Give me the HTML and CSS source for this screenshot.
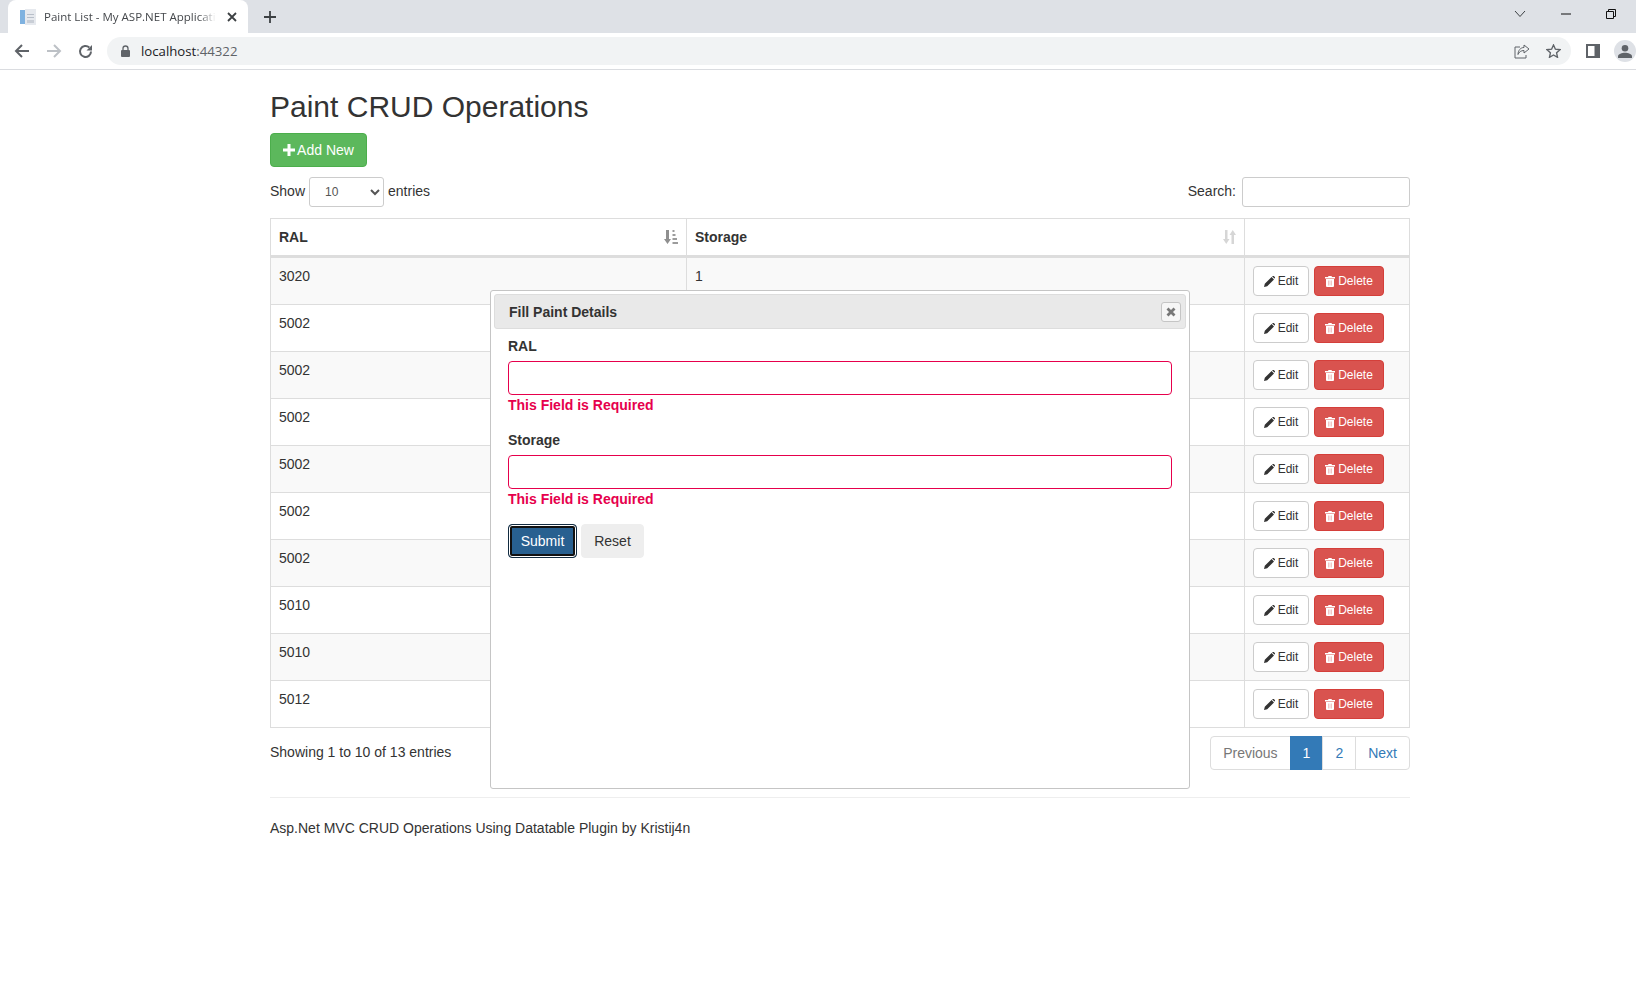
FILE: index.html
```html
<!DOCTYPE html>
<html>
    <head>
        <meta charset="utf-8">
        <title>Paint List - My ASP.NET Application</title>
        <link rel="stylesheet" href="styles.css">
    </head>
    <body>
      <div class="tabstrip">
        <div class="tab">
          <svg class="favicon" width="16" height="16" viewBox="0 0 16 16"><rect x="0" y="1" width="5" height="14" fill="#7fb2e0"/><rect x="5" y="0" width="11" height="16" fill="#e6e9ee"/><rect x="7" y="5" width="7" height="1" fill="#b8bfc9"/><rect x="7" y="8" width="7" height="1" fill="#b8bfc9"/><rect x="7" y="11" width="7" height="3" fill="#c9ced6"/></svg>
          <span class="tabTitle">Paint List - My ASP.NET Applicati</span>
          <svg class="tabClose" width="10" height="10" viewBox="0 0 10 10"><path d="M1 1l8 8M9 1l-8 8" stroke="#3c4043" stroke-width="1.8"/></svg>
        </div>
        <svg class="newTab" width="14" height="14" viewBox="0 0 14 14"><path d="M7 1v12M1 7h12" stroke="#3c4043" stroke-width="1.8"/></svg>
        <div class="winControls">
          <svg width="12" height="8" viewBox="0 0 12 8"><path d="M1 1l5 5.5L11 1" fill="none" stroke="#3c4043" stroke-width="1"/></svg>
          <svg width="10" height="2" viewBox="0 0 10 2"><path d="M0 1h10" stroke="#111" stroke-width="1"/></svg>
          <svg width="10" height="10" viewBox="0 0 10 10"><path d="M.5 2.5h7v7h-7zM2.5 2.5v-2h7v7h-2" fill="none" stroke="#111" stroke-width="1"/></svg>
        </div>
      </div>

      <div class="toolbar">
        <div class="navBtn"><svg width="16" height="14" viewBox="0 0 16 14"><path d="M15 7H2M8 1L2 7l6 6" fill="none" stroke="#5f6368" stroke-width="2"/></svg></div>
        <div class="navBtn"><svg width="16" height="14" viewBox="0 0 16 14"><path d="M1 7h13M8 1l6 6-6 6" fill="none" stroke="#bdc1c6" stroke-width="2"/></svg></div>
        <div class="navBtn"><svg width="15" height="15" viewBox="0 0 15 15"><path d="M13 7.5A5.5 5.5 0 1 1 11.3 3.5" fill="none" stroke="#5f6368" stroke-width="2"/><path d="M14 1v5.5H8.500z" fill="#5f6368"/></svg></div>
        <div class="addressBar">
          <svg width="9" height="12" viewBox="0 0 9 12"><path d="M2 5V3.500a2.500 2.500 0 0 1 5 0V5" fill="none" stroke="#5f6368" stroke-width="1.300"/><rect x="0" y="5" width="9" height="7" rx="1" fill="#5f6368"/></svg>
          <span class="url">localhost<span class="port">:44322</span></span>
          <div class="addressIcons">
            <svg width="16" height="15" viewBox="0 0 16 15"><path d="M6 3H1v11h11v-3" fill="none" stroke="#5f6368" stroke-width="1"/><path d="M10 1l5 4-5 4V6.500C7 6.500 5 8 4 10.500 4 6.500 6.500 3.500 10 3.500z" fill="none" stroke="#5f6368" stroke-width="1"/></svg>
            <svg width="15" height="14" viewBox="0 0 15 14"><path d="M7.500 1l1.900 4.200 4.600.5-3.400 3.100.9 4.500-4-2.300-4 2.300.9-4.500L1 5.700l4.600-.5z" fill="none" stroke="#5f6368" stroke-width="1.400"/></svg>
          </div>
        </div>
        <svg class="sidePanel" width="14" height="14" viewBox="0 0 14 14"><rect width="14" height="14" fill="#5f6368"/><rect x="2" y="2" width="6.500" height="10" fill="#fff"/></svg>
        <div class="avatar"><svg width="14" height="13" viewBox="0 0 14 13"><circle cx="7" cy="3.300" r="3.300" fill="#5f6368"/><path d="M0 13v-1.500C0 9 4 7.800 7 7.800s7 1.200 7 3.700V13z" fill="#5f6368"/></svg></div>
      </div>

      <div class="page">
        <h2>Paint CRUD Operations</h2>
        <a class="btn btnSuccess addNew">
          <svg width="12" height="12" viewBox="0 0 12 12"><path d="M4.500 0h3v4.500H12v3H7.500V12h-3V7.500H0v-3h4.500z" fill="#fff"/></svg>
          Add New
        </a>

        <div class="tableTools">
          <label class="lengthLabel">Show
            <select class="lengthSelect"><option>10</option></select>
            entries</label>
          <label class="searchLabel">Search:
            <input class="searchInput" type="search">
          </label>
        </div>

        <table class="paintTable">
          <thead>
            <tr>
              <th class="colRal">RAL
                <svg class="sortIcon" width="14" height="14" viewBox="0 0 14 14"><path d="M2 0h3v9h2l-3.500 5L0 9h2z" fill="#8f8f8f"/><path d="M8.500 0h2v2h-2zM8.500 4h3v2h-3zM8.500 8h4.500v2H8.500zM8.500 12H14v2H8.500z" fill="#9c9c9c"/></svg>
              </th>
              <th class="colStorage">Storage
                <svg class="sortIcon" width="13" height="14" viewBox="0 0 13 14"><path d="M2 0h2.500v9h2L3.250 14 0 9h2zM8.500 14H11V5h2L9.750 0 6.500 5h2z" fill="#d6d6d6"/></svg>
              </th>
              <th class="colActions"></th>
            </tr>
          </thead>
          <tbody>
            <tr><td>3020</td><td>1</td><td><div class="actions"><a class="btn btnDefault btnSm"><svg class="pencil" width="11" height="11" viewBox="0 0 11 11"><path d="M0 11l.8-3.200L7.600 1l2.400 2.400-6.800 6.800zM8.200.400l.4-.400a1 1 0 0 1 1.200 0l1 1a1 1 0 0 1 0 1.200l-.4.400z" fill="#333"/></svg>Edit</a><a class="btn btnDanger btnSm"><svg class="trash" width="10" height="11" viewBox="0 0 10 11"><path d="M3.500 0h3l.5 1h3v1.500H0V1h3zM1 3h8v7a1 1 0 0 1-1 1H2a1 1 0 0 1-1-1z" fill="#fff"/><path d="M3.500 4.500v5M5 4.500v5M6.500 4.500v5" stroke="#e8a09d" stroke-width=".6"/></svg>Delete</a></div></td></tr>
            <tr><td>5002</td><td></td><td><div class="actions"><a class="btn btnDefault btnSm"><svg class="pencil" width="11" height="11" viewBox="0 0 11 11"><path d="M0 11l.8-3.200L7.600 1l2.400 2.400-6.800 6.800zM8.200.400l.4-.400a1 1 0 0 1 1.200 0l1 1a1 1 0 0 1 0 1.200l-.4.400z" fill="#333"/></svg>Edit</a><a class="btn btnDanger btnSm"><svg class="trash" width="10" height="11" viewBox="0 0 10 11"><path d="M3.500 0h3l.5 1h3v1.500H0V1h3zM1 3h8v7a1 1 0 0 1-1 1H2a1 1 0 0 1-1-1z" fill="#fff"/><path d="M3.500 4.500v5M5 4.500v5M6.500 4.500v5" stroke="#e8a09d" stroke-width=".6"/></svg>Delete</a></div></td></tr>
            <tr><td>5002</td><td></td><td><div class="actions"><a class="btn btnDefault btnSm"><svg class="pencil" width="11" height="11" viewBox="0 0 11 11"><path d="M0 11l.8-3.200L7.600 1l2.400 2.400-6.800 6.800zM8.200.400l.4-.400a1 1 0 0 1 1.200 0l1 1a1 1 0 0 1 0 1.200l-.4.400z" fill="#333"/></svg>Edit</a><a class="btn btnDanger btnSm"><svg class="trash" width="10" height="11" viewBox="0 0 10 11"><path d="M3.500 0h3l.5 1h3v1.500H0V1h3zM1 3h8v7a1 1 0 0 1-1 1H2a1 1 0 0 1-1-1z" fill="#fff"/><path d="M3.500 4.500v5M5 4.500v5M6.500 4.500v5" stroke="#e8a09d" stroke-width=".6"/></svg>Delete</a></div></td></tr>
            <tr><td>5002</td><td></td><td><div class="actions"><a class="btn btnDefault btnSm"><svg class="pencil" width="11" height="11" viewBox="0 0 11 11"><path d="M0 11l.8-3.200L7.600 1l2.400 2.400-6.800 6.800zM8.200.400l.4-.400a1 1 0 0 1 1.200 0l1 1a1 1 0 0 1 0 1.200l-.4.400z" fill="#333"/></svg>Edit</a><a class="btn btnDanger btnSm"><svg class="trash" width="10" height="11" viewBox="0 0 10 11"><path d="M3.500 0h3l.5 1h3v1.500H0V1h3zM1 3h8v7a1 1 0 0 1-1 1H2a1 1 0 0 1-1-1z" fill="#fff"/><path d="M3.500 4.500v5M5 4.500v5M6.500 4.500v5" stroke="#e8a09d" stroke-width=".6"/></svg>Delete</a></div></td></tr>
            <tr><td>5002</td><td></td><td><div class="actions"><a class="btn btnDefault btnSm"><svg class="pencil" width="11" height="11" viewBox="0 0 11 11"><path d="M0 11l.8-3.200L7.600 1l2.400 2.400-6.800 6.800zM8.200.400l.4-.400a1 1 0 0 1 1.200 0l1 1a1 1 0 0 1 0 1.200l-.4.400z" fill="#333"/></svg>Edit</a><a class="btn btnDanger btnSm"><svg class="trash" width="10" height="11" viewBox="0 0 10 11"><path d="M3.500 0h3l.5 1h3v1.500H0V1h3zM1 3h8v7a1 1 0 0 1-1 1H2a1 1 0 0 1-1-1z" fill="#fff"/><path d="M3.500 4.500v5M5 4.500v5M6.500 4.500v5" stroke="#e8a09d" stroke-width=".6"/></svg>Delete</a></div></td></tr>
            <tr><td>5002</td><td></td><td><div class="actions"><a class="btn btnDefault btnSm"><svg class="pencil" width="11" height="11" viewBox="0 0 11 11"><path d="M0 11l.8-3.200L7.600 1l2.400 2.400-6.800 6.800zM8.200.400l.4-.400a1 1 0 0 1 1.200 0l1 1a1 1 0 0 1 0 1.200l-.4.400z" fill="#333"/></svg>Edit</a><a class="btn btnDanger btnSm"><svg class="trash" width="10" height="11" viewBox="0 0 10 11"><path d="M3.500 0h3l.5 1h3v1.500H0V1h3zM1 3h8v7a1 1 0 0 1-1 1H2a1 1 0 0 1-1-1z" fill="#fff"/><path d="M3.500 4.500v5M5 4.500v5M6.500 4.500v5" stroke="#e8a09d" stroke-width=".6"/></svg>Delete</a></div></td></tr>
            <tr><td>5002</td><td></td><td><div class="actions"><a class="btn btnDefault btnSm"><svg class="pencil" width="11" height="11" viewBox="0 0 11 11"><path d="M0 11l.8-3.200L7.600 1l2.400 2.400-6.800 6.800zM8.200.400l.4-.400a1 1 0 0 1 1.200 0l1 1a1 1 0 0 1 0 1.200l-.4.400z" fill="#333"/></svg>Edit</a><a class="btn btnDanger btnSm"><svg class="trash" width="10" height="11" viewBox="0 0 10 11"><path d="M3.500 0h3l.5 1h3v1.500H0V1h3zM1 3h8v7a1 1 0 0 1-1 1H2a1 1 0 0 1-1-1z" fill="#fff"/><path d="M3.500 4.500v5M5 4.500v5M6.500 4.500v5" stroke="#e8a09d" stroke-width=".6"/></svg>Delete</a></div></td></tr>
            <tr><td>5010</td><td></td><td><div class="actions"><a class="btn btnDefault btnSm"><svg class="pencil" width="11" height="11" viewBox="0 0 11 11"><path d="M0 11l.8-3.200L7.600 1l2.400 2.400-6.800 6.800zM8.200.400l.4-.400a1 1 0 0 1 1.200 0l1 1a1 1 0 0 1 0 1.200l-.4.400z" fill="#333"/></svg>Edit</a><a class="btn btnDanger btnSm"><svg class="trash" width="10" height="11" viewBox="0 0 10 11"><path d="M3.500 0h3l.5 1h3v1.500H0V1h3zM1 3h8v7a1 1 0 0 1-1 1H2a1 1 0 0 1-1-1z" fill="#fff"/><path d="M3.500 4.500v5M5 4.500v5M6.500 4.500v5" stroke="#e8a09d" stroke-width=".6"/></svg>Delete</a></div></td></tr>
            <tr><td>5010</td><td></td><td><div class="actions"><a class="btn btnDefault btnSm"><svg class="pencil" width="11" height="11" viewBox="0 0 11 11"><path d="M0 11l.8-3.200L7.600 1l2.400 2.400-6.800 6.800zM8.200.400l.4-.400a1 1 0 0 1 1.200 0l1 1a1 1 0 0 1 0 1.200l-.4.400z" fill="#333"/></svg>Edit</a><a class="btn btnDanger btnSm"><svg class="trash" width="10" height="11" viewBox="0 0 10 11"><path d="M3.500 0h3l.5 1h3v1.500H0V1h3zM1 3h8v7a1 1 0 0 1-1 1H2a1 1 0 0 1-1-1z" fill="#fff"/><path d="M3.500 4.500v5M5 4.500v5M6.500 4.500v5" stroke="#e8a09d" stroke-width=".6"/></svg>Delete</a></div></td></tr>
            <tr><td>5012</td><td></td><td><div class="actions"><a class="btn btnDefault btnSm"><svg class="pencil" width="11" height="11" viewBox="0 0 11 11"><path d="M0 11l.8-3.200L7.600 1l2.400 2.400-6.800 6.800zM8.200.400l.4-.400a1 1 0 0 1 1.200 0l1 1a1 1 0 0 1 0 1.200l-.4.400z" fill="#333"/></svg>Edit</a><a class="btn btnDanger btnSm"><svg class="trash" width="10" height="11" viewBox="0 0 10 11"><path d="M3.500 0h3l.5 1h3v1.500H0V1h3zM1 3h8v7a1 1 0 0 1-1 1H2a1 1 0 0 1-1-1z" fill="#fff"/><path d="M3.500 4.500v5M5 4.500v5M6.500 4.500v5" stroke="#e8a09d" stroke-width=".6"/></svg>Delete</a></div></td></tr>
          </tbody>
        </table>

        <div class="tableFooter">
          <div class="tableInfo">Showing 1 to 10 of 13 entries</div>
          <ul class="pagination">
            <li class="pageDisabled">Previous</li>
            <li class="pageActive">1</li>
            <li>2</li>
            <li>Next</li>
          </ul>
        </div>

        <hr class="footerRule">
        <footer>Asp.Net MVC CRUD Operations Using Datatable Plugin by Kristij4n</footer>
      </div>

      <div class="dialog">
        <div class="dialogTitle">
          <span>Fill Paint Details</span>
          <button class="dialogClose"><svg width="10" height="10" viewBox="0 0 10 10"><path d="M1.500 1.500l7 7M8.500 1.500l-7 7" stroke="#777" stroke-width="2.800"/></svg></button>
        </div>
        <form class="dialogBody">
          <div class="formGroup">
            <label class="formLabel">RAL</label>
            <input class="formInput" type="text">
            <span class="fieldError">This Field is Required</span>
          </div>
          <div class="formGroup">
            <label class="formLabel">Storage</label>
            <input class="formInput" type="text">
            <span class="fieldError">This Field is Required</span>
          </div>
          <div class="formButtons">
            <button class="btn btnSubmit" type="button">Submit</button>
            <button class="btn btnReset" type="button">Reset</button>
          </div>
        </form>
      </div>
    </body>
</html>
```

FILE: styles.css
```css
body {
    margin: 0;
    font-family: "Liberation Sans", Arial, sans-serif;
    font-size: 14px;
    line-height: 20px;
    color: #333;
    background-color: #fff;
    overflow: hidden;
    height: 1004px;
}

/* browser chrome */
.tabstrip {
    height: 33px;
    background-color: #dee1e6;
    display: flex;
    align-items: center;
    padding-left: 8px;
}

.tab {
    width: 240px;
    height: 33px;
    box-sizing: border-box;
    background-color: #fff;
    border-radius: 8px 8px 0 0;
    display: flex;
    align-items: center;
    padding: 0 11px 0 12px;
}

.favicon { flex: none; margin-right: 8px; }

.tabTitle {
    font-family: "Open Sans", sans-serif;
    font-size: 11.500px;
    color: #45484c;
    white-space: nowrap;
    -webkit-mask-image: linear-gradient(to right, #000 90%, transparent);
    mask-image: linear-gradient(to right, #000 90%, transparent);
}

.tabClose { margin-left: auto; }

.newTab { margin-left: 15px; }

.winControls {
    margin-left: auto;
    display: flex;
    align-items: center;
    gap: 35px;
    padding-right: 20px;
    position: relative;
    top: -3px;
}

.toolbar {
    height: 36px;
    border-bottom: 1px solid #dadce0;
    display: flex;
    align-items: center;
    padding-left: 7px;
    overflow: hidden;
}

.navBtn {
    width: 30px;
    height: 28px;
    display: flex;
    align-items: center;
    justify-content: center;
}

.navBtn:first-child { margin-right: 2px; }
.navBtn:nth-child(2) { margin-right: 2px; }

.addressBar {
    width: 1464px;
    height: 28px;
    margin-left: 7px;
    flex: none;
    background-color: #f1f3f4;
    border-radius: 14px;
    display: flex;
    align-items: center;
    padding-left: 14px;
    box-sizing: border-box;
}

.url {
    margin-left: 11px;
    font-family: "Open Sans", sans-serif;
    font-size: 13.200px;
    color: #202124;
}

.port { color: #5f6368; }

.addressIcons {
    margin-left: auto;
    display: flex;
    align-items: center;
    gap: 16px;
    padding-right: 10px;
}

.sidePanel { flex: none; margin-left: 15px; }

.avatar {
    flex: none;
    width: 22px;
    height: 22px;
    margin-left: 14px;
    border-radius: 50%;
    background-color: #dee1e6;
    display: flex;
    align-items: center;
    justify-content: center;
}

/* page */
.page {
    width: 1140px;
    margin-left: 270px;
}

h2 {
    font-size: 30px;
    font-weight: 500;
    line-height: 33px;
    margin: 20px 0 10px;
}

.btn {
    display: inline-flex;
    align-items: center;
    justify-content: center;
    box-sizing: border-box;
    border: 1px solid transparent;
    border-radius: 4px;
    font-family: inherit;
    font-size: 14px;
}

.addNew { width: 97px; height: 34px; gap: 2px; }
.btnSuccess { background-color: #5cb85c; border-color: #4cae4c; color: #fff; }
.btnDefault { background-color: #fff; border-color: #ccc; color: #333; }
.btnDanger { background-color: #d9534f; border-color: #d43f3a; color: #fff; }

.btnSm { height: 30px; font-size: 12px; }
.btnDefault.btnSm { width: 56px; }
.btnDanger.btnSm { width: 70px; }
.pencil, .trash { margin-right: 3px; }

.tableTools {
    display: flex;
    justify-content: space-between;
    margin-top: 10px;
    height: 30px;
}

.lengthLabel, .searchLabel {
    display: flex;
    align-items: flex-start;
    line-height: 28px;
    gap: 4px;
}
.searchLabel { gap: 6px; }

.lengthSelect {
    width: 75px;
    height: 30px;
    padding: 0 0 0 11px;
    font-family: inherit;
    font-size: 12px;
    color: #555;
    background-color: #fff;
    border: 1px solid #ccc;
    border-radius: 3px;
}

.searchInput {
    width: 168px;
    height: 30px;
    box-sizing: border-box;
    border: 1px solid #ccc;
    border-radius: 3px;
}

.paintTable {
    width: 1140px;
    margin-top: 11px;
    border-collapse: collapse;
    table-layout: fixed;
}

.paintTable th, .paintTable td {
    border: 1px solid #ddd;
    padding: 8px;
    text-align: left;
    vertical-align: top;
}

.paintTable th {
    height: 20px;
    border-bottom-width: 3px;
    position: relative;
}

.paintTable tbody tr:nth-child(odd) { background-color: #f9f9f9; }

.colRal { width: 399px; }
.colStorage { width: 541px; }

.sortIcon { position: absolute; right: 8px; top: 11px; }

.actions { display: flex; gap: 5px; }

.tableFooter {
    display: flex;
    justify-content: space-between;
    align-items: flex-start;
}

.tableInfo { padding-top: 14px; }

.pagination {
    list-style: none;
    display: flex;
    margin: 8px 0 0;
    padding: 0;
}

.pagination li {
    height: 34px;
    box-sizing: border-box;
    padding: 6px 12px;
    border: 1px solid #ddd;
    margin-left: -1px;
    color: #337ab7;
    background-color: #fff;
}

.pagination li:first-child { border-radius: 4px 0 0 4px; }
.pagination li:last-child { border-radius: 0 4px 4px 0; }
.pagination .pageDisabled { color: #777; }
.pagination .pageActive { background-color: #337ab7; border-color: #337ab7; color: #fff; }

.footerRule {
    margin: 27px 0 0;
    border: 0;
    border-top: 1px solid #eee;
}

footer { margin-top: 20px; }

/* dialog over the table */
.dialog {
    position: absolute;
    left: 490px;
    top: 290px;
    width: 700px;
    height: 499px;
    box-sizing: border-box;
    padding: 3px;
    background-color: #fff;
    border: 1px solid #c5c5c5;
    border-radius: 3px;
}

.dialogTitle {
    height: 35px;
    box-sizing: border-box;
    display: flex;
    align-items: center;
    justify-content: space-between;
    padding: 0 4px 0 14px;
    background-color: #e9e9e9;
    border: 1px solid #ddd;
    border-radius: 3px;
    font-weight: bold;
}

.dialogClose {
    width: 20px;
    height: 20px;
    padding: 0;
    display: flex;
    align-items: center;
    justify-content: center;
    background-color: #f6f6f6;
    border: 1px solid #c5c5c5;
    border-radius: 3px;
}

.dialogBody { padding: 7px 14px 0; }

.formGroup { margin-bottom: 15px; }

.formLabel {
    display: block;
    font-weight: bold;
    margin-bottom: 5px;
}

.formInput {
    display: block;
    width: 664px;
    height: 34px;
    box-sizing: border-box;
    border: 1px solid #e6004c;
    border-radius: 4px;
}

.fieldError {
    display: block;
    color: #e6004c;
    font-weight: bold;
}

.formButtons { display: flex; gap: 4px; }

.btnSubmit {
    width: 69px;
    height: 34px;
    color: #fff;
    background-color: #286090;
    border: 1px solid #122b40;
    box-shadow: inset 0 0 0 1px #fff, inset 0 0 0 3px #111;
}

.btnReset {
    width: 63px;
    height: 34px;
    color: #333;
    background-color: #eee;
    border-color: #eee;
}
```
